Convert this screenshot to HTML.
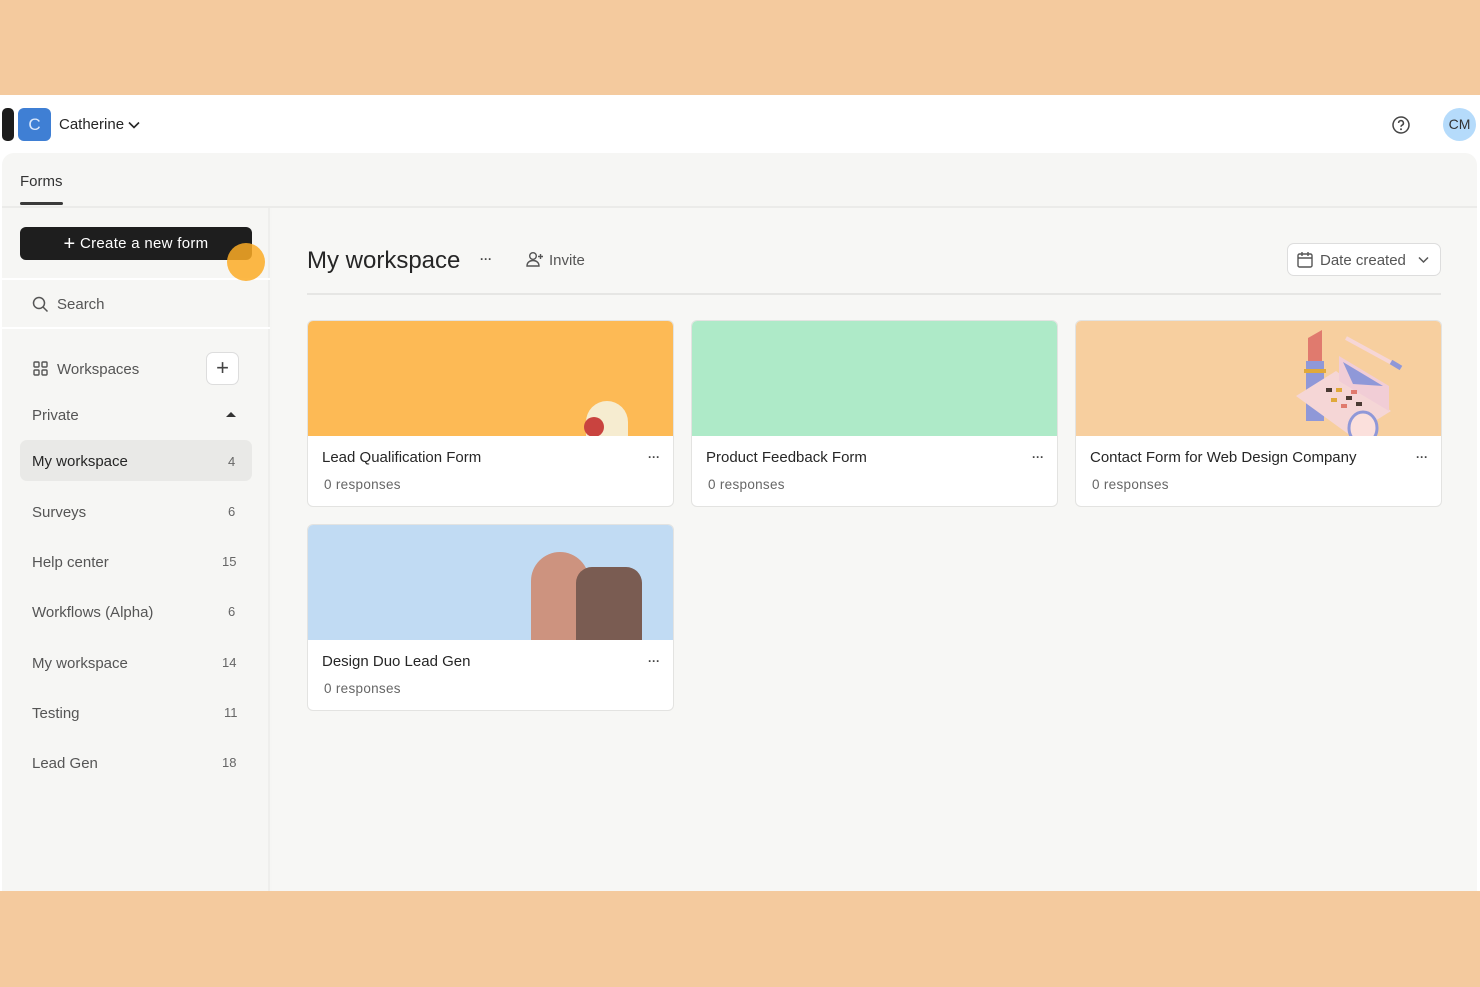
<!DOCTYPE html>
<html><head><meta charset="utf-8"><style>
*{box-sizing:border-box;margin:0;padding:0}
body{width:1480px;height:987px;background:#F4CA9E;font-family:"Liberation Sans",sans-serif;color:#262626;position:relative;overflow:hidden}
.a{position:absolute}
.white{left:0;top:95px;width:1480px;height:796px;background:#fff}
.panel{left:2px;top:153px;width:1475px;height:738px;background:#f6f6f4;border-radius:12px 12px 0 0}
.side{left:2px;top:208px;width:268px;height:683px;background:#f6f6f4;border-right:2px solid #eeeeec}
.main{left:272px;top:208px;width:1205px;height:683px;background:#f7f7f5}
.nav{font-size:15px;color:#555}
.cnt{font-size:13px;color:#666}
.card{background:#fff;border:1px solid #e3e3e1;border-radius:6px;overflow:hidden;width:367px;height:187px}
.card .img{height:115px;position:relative;overflow:hidden}
.card .t{position:absolute;left:14px;top:128px;font-size:15px;color:#262626}
.card .r{position:absolute;left:16px;top:156px;font-size:13.5px;color:#666;letter-spacing:.3px}
.card .d{position:absolute;right:13px;top:129px;font-size:12px;color:#444;letter-spacing:0;font-weight:bold}
</style></head><body>
<div class="a white"></div>
<div class="a" style="left:2px;top:108px;width:12px;height:33px;background:#1c1c1c;border-radius:5px"></div>
<div class="a" style="left:18px;top:108px;width:33px;height:33px;background:#3f7fd4;border-radius:6px;color:#dbe8fb;font-size:17px;text-align:center;line-height:33px">C</div>
<div class="a" style="left:59px;top:116px;font-size:15px;color:#262626">Catherine <svg width="12" height="8" viewBox="0 0 12 8"><path d="M1 1.5l5 5 5-5" stroke="#262626" stroke-width="1.6" fill="none"/></svg></div>
<svg class="a" style="left:1391px;top:115px" width="20" height="20" viewBox="0 0 20 20"><circle cx="10" cy="10" r="8" stroke="#444" stroke-width="1.5" fill="none"/><path d="M7.6 8a2.4 2.4 0 1 1 3.4 2.2c-.7.4-1 .8-1 1.6" stroke="#444" stroke-width="1.5" fill="none"/><circle cx="10" cy="14.3" r="1" fill="#444"/></svg>
<div class="a" style="left:1443px;top:108px;width:33px;height:33px;border-radius:50%;background:#b5dbfb;font-size:14px;text-align:center;line-height:33px;color:#333">CM</div>
<div class="a panel"></div>
<div class="a" style="left:20px;top:173px;font-size:15px;color:#333">Forms</div>
<div class="a" style="left:20px;top:202px;width:43px;height:3px;background:#3a3a3a;border-radius:2px"></div>
<div class="a" style="left:2px;top:206px;width:1475px;height:2px;background:#ebebe9"></div>
<div class="a side"></div>
<div class="a main"></div>
<div class="a" style="left:2px;top:278px;width:268px;height:2px;background:#fff"></div>
<div class="a" style="left:2px;top:327px;width:268px;height:2px;background:#fff"></div>
<div class="a" style="left:20px;top:227px;width:232px;height:33px;background:#1e1e1e;border-radius:6px;color:#fff;font-size:15px;text-align:center;line-height:33px;letter-spacing:.3px"><span style="font-size:20px;vertical-align:-2px">+</span> Create a new form</div>
<div class="a" style="left:227px;top:243px;width:38px;height:38px;border-radius:50%;background:rgba(252,172,38,.85)"></div>
<svg class="a" style="left:32px;top:296px" width="17" height="17" viewBox="0 0 17 17"><circle cx="7" cy="7" r="5.5" stroke="#555" stroke-width="1.5" fill="none"/><path d="M11 11l4.5 4.5" stroke="#555" stroke-width="1.5"/></svg>
<div class="a nav" style="left:57px;top:296px">Search</div>
<svg class="a" style="left:33px;top:361px" width="15" height="15" viewBox="0 0 15 15" fill="none" stroke="#555" stroke-width="1.4"><rect x="1" y="1" width="5" height="5" rx="1"/><rect x="9" y="1" width="5" height="5" rx="1"/><rect x="1" y="9" width="5" height="5" rx="1"/><rect x="9" y="9" width="5" height="5" rx="1"/></svg>
<div class="a nav" style="left:57px;top:361px">Workspaces</div>
<div class="a" style="left:206px;top:352px;width:33px;height:33px;border:1px solid #ddd;border-radius:7px;background:#fff;text-align:center;line-height:30px;font-size:22px;color:#444">+</div>
<div class="a nav" style="left:32px;top:407px">Private</div>
<svg class="a" style="left:226px;top:411px" width="10" height="7"><path d="M0 6L5 1l5 5z" fill="#333"/></svg>
<div class="a" style="left:20px;top:440px;width:232px;height:41px;background:#e9e9e7;border-radius:7px"></div>
<div class="a nav" style="left:32px;top:453px;color:#262626">My workspace</div><div class="a cnt" style="left:228px;top:454px">4</div>
<div class="a nav" style="left:32px;top:504px">Surveys</div><div class="a cnt" style="left:228px;top:504px">6</div>
<div class="a nav" style="left:32px;top:554px">Help center</div><div class="a cnt" style="left:222px;top:554px">15</div>
<div class="a nav" style="left:32px;top:604px">Workflows (Alpha)</div><div class="a cnt" style="left:228px;top:604px">6</div>
<div class="a nav" style="left:32px;top:655px">My workspace</div><div class="a cnt" style="left:222px;top:655px">14</div>
<div class="a nav" style="left:32px;top:705px">Testing</div><div class="a cnt" style="left:224px;top:705px">11</div>
<div class="a nav" style="left:32px;top:755px">Lead Gen</div><div class="a cnt" style="left:222px;top:755px">18</div>

<div class="a" style="left:307px;top:247px;font-size:24px;color:#262626">My workspace</div>
<div class="a" style="left:480px;top:252px;font-size:12px;font-weight:bold;color:#444">···</div>
<svg class="a" style="left:526px;top:251px" width="18" height="16" viewBox="0 0 18 16" fill="none" stroke="#555" stroke-width="1.4"><circle cx="7" cy="5" r="3.3"/><path d="M1 15c0-3.5 2.7-5.5 6-5.5s6 2 6 5.5z"/><path d="M14.5 3v5M12 5.5h5"/></svg>
<div class="a" style="left:549px;top:252px;font-size:15px;color:#555">Invite</div>
<div class="a" style="left:1287px;top:243px;width:154px;height:33px;border:1px solid #ddd;border-radius:7px;background:#fff"></div>
<svg class="a" style="left:1297px;top:251px" width="16" height="17" viewBox="0 0 16 17" fill="none" stroke="#555" stroke-width="1.4"><rect x="1" y="3" width="14" height="13" rx="1.5"/><path d="M1 7h14M5 1v4M11 1v4"/></svg>
<div class="a" style="left:1320px;top:252px;font-size:15px;color:#555">Date created</div>
<svg class="a" style="left:1418px;top:256px" width="11" height="8"><path d="M1 1.5l4.5 4.5 4.5-4.5" stroke="#555" stroke-width="1.5" fill="none"/></svg>
<div class="a" style="left:307px;top:293px;width:1134px;height:2px;background:#e6e6e4"></div>

<div class="a card" style="left:307px;top:320px"><div class="img" style="background:#fdba55">
<div class="a" style="left:278px;top:80px;width:42px;height:60px;border-radius:21px;background:#f6ecd0"></div>
<div class="a" style="left:276px;top:96px;width:20px;height:20px;border-radius:50%;background:#c9433f"></div></div>
<div class="t">Lead Qualification Form</div><div class="r">0 responses</div><div class="d">···</div></div>

<div class="a card" style="left:691px;top:320px"><div class="img" style="background:#aeeac8"></div>
<div class="t">Product Feedback Form</div><div class="r">0 responses</div><div class="d">···</div></div>

<div class="a card" style="left:1075px;top:320px"><div class="img" style="background:#f7cf9f">
<svg class="a" style="left:215px;top:5px" width="120" height="110" viewBox="0 0 120 110">
<rect x="15" y="35" width="18" height="60" fill="#8f98d8"/><path d="M17 35V12l14-8v31z" fill="#e07a6e"/><rect x="13" y="43" width="22" height="4" fill="#e0a93a"/>
<path d="M5 70l40 -25 55 40-40 25z" fill="#f5d6d6"/><path d="M48 30l50 30v25l-50-30z" fill="#f1cdd6"/><path d="M52 36l40 24-30-2z" fill="#8f98d8"/>
<g fill="#4a3a33"><rect x="35" y="62" width="6" height="4"/><rect x="55" y="70" width="6" height="4"/><rect x="65" y="76" width="6" height="4"/></g>
<g fill="#e0a93a"><rect x="45" y="62" width="6" height="4"/><rect x="40" y="72" width="6" height="4"/></g>
<g fill="#e07a6e"><rect x="60" y="64" width="6" height="4"/><rect x="50" y="78" width="6" height="4"/></g>
<ellipse cx="72" cy="102" rx="14" ry="16" fill="#fbe0dc" stroke="#8f98d8" stroke-width="3"/>
<path d="M55 12l55 30" stroke="#f6d6d6" stroke-width="4"/><path d="M100 36l10 6" stroke="#8f98d8" stroke-width="5"/>
</svg></div>
<div class="t">Contact Form for Web Design Company</div><div class="r">0 responses</div><div class="d">···</div></div>

<div class="a card" style="left:307px;top:524px"><div class="img" style="background:#c1dbf3">
<div class="a" style="left:223px;top:27px;width:58px;height:110px;border-radius:29px 29px 0 0;background:#cd937f"></div>
<div class="a" style="left:268px;top:42px;width:66px;height:100px;border-radius:16px 16px 0 0;background:#7a5c52"></div></div>
<div class="t">Design Duo Lead Gen</div><div class="r">0 responses</div><div class="d">···</div></div>
</body></html>
